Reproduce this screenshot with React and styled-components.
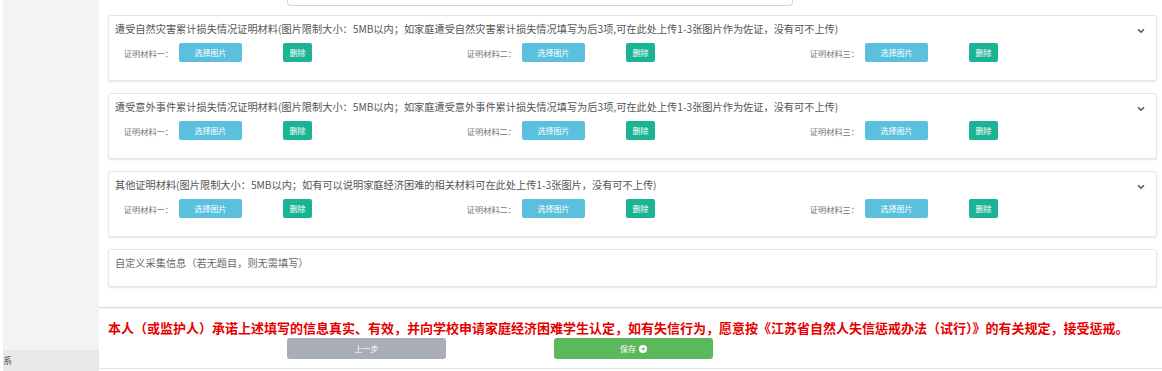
import React from 'react';
import styled, { createGlobalStyle } from 'styled-components';

const GlobalStyle = createGlobalStyle`
  html, body {
    margin: 0;
    padding: 0;
    background: #fff;
    font-family: "Noto Sans CJK SC", "Noto Sans", sans-serif;
  }
`;

const Page = styled.div`
  display: flex;
  height: 371px;
  overflow: hidden;
`;

const Sidebar = styled.div`
  flex-shrink: 0;
  width: 96px;
  margin-left: 3px;
  display: flex;
  flex-direction: column;
  background: #f3f3f3;
`;

const SidebarFill = styled.div`
  flex: 1;
`;

const SidebarFoot = styled.div`
  height: 21px;
  background: #e9e9e9;
  font-size: 9px;
  color: #555;
  line-height: 21px;
  overflow: hidden;
`;

const Main = styled.div`
  flex: 1;
  min-width: 0;
  display: flex;
  flex-direction: column;
  border-bottom: 1px solid #e4e4e4;
  margin-bottom: 2px;
`;

const TopStub = styled.div`
  margin-left: 188px;
  width: 504px;
  height: 5px;
  border: 1px solid #d2d2d2;
  border-top: none;
  border-radius: 0 0 4px 4px;
`;

const Panels = styled.div`
  display: flex;
  flex-direction: column;
  gap: 12px;
  margin: 9px 5px 0 9px;
`;

const Panel = styled.div`
  position: relative;
  box-sizing: border-box;
  height: ${p => (p.$short ? 38 : 66)}px;
  border: 1px solid #e6e6e6;
  border-radius: 3px;
  box-shadow: 0 1px 2px rgba(0, 0, 0, 0.1);
  padding: 5px 7px 0 6px;
  background: #fff;
  overflow: hidden;
`;

const Title = styled.div`
  font-size: 10.2px;
  line-height: 16px;
  color: ${p => (p.$muted ? '#6a6a6a' : '#555')};
  white-space: nowrap;
`;

const Chevron = styled.svg`
  position: absolute;
  right: 11px;
  top: 12px;
  width: 8px;
  height: 6px;
`;

const Row = styled.div`
  display: grid;
  grid-template-columns: repeat(3, 343px);
  margin-top: 6px;
`;

const Item = styled.div`
  display: flex;
  align-items: center;
  height: 19px;
`;

const Label = styled.span`
  width: 58px;
  text-align: right;
  font-size: 8.2px;
  color: #777;
  white-space: nowrap;
`;

const SmallButton = styled.span`
  display: inline-flex;
  align-items: center;
  justify-content: center;
  box-sizing: border-box;
  height: 19px;
  width: ${p => p.$w}px;
  margin-left: ${p => p.$ml}px;
  border-radius: 2px;
  background: ${p => p.$bg};
  color: #fff;
  font-size: 8px;
`;

const Divider = styled.div`
  margin-top: 20px;
  height: 1px;
  background: #d9d9d9;
  box-shadow: 0 1px 1px rgba(0, 0, 0, 0.05);
`;

const Promise = styled.div`
  margin: 12px 0 0 9px;
  font-size: 13px;
  line-height: 16px;
  font-weight: bold;
  color: #e50000;
  white-space: nowrap;
`;

const Actions = styled.div`
  display: flex;
  gap: 108px;
  margin: 2px 0 0 188px;
`;

const ActionButton = styled.span`
  display: inline-flex;
  align-items: center;
  justify-content: center;
  gap: 3px;
  width: 159px;
  height: 21px;
  border-radius: 3px;
  background: ${p => p.$bg};
  color: #fff;
  font-size: 8px;
`;

const materials = ['证明材料一：', '证明材料二：', '证明材料三：'];

const UploadPanel = ({ title }) => (
  <Panel>
    <Title>{title}</Title>
    <Chevron viewBox="0 0 8 6">
      <path d="M1 1.2 L4 4.2 L7 1.2" fill="none" stroke="#555" strokeWidth="1.6" />
    </Chevron>
    <Row>
      {materials.map(m => (
        <Item key={m}>
          <Label>{m}</Label>
          <SmallButton $w={63} $ml={6} $bg="#5bc0de">选择图片</SmallButton>
          <SmallButton $w={29} $ml={41} $bg="#1ab394">删除</SmallButton>
        </Item>
      ))}
    </Row>
  </Panel>
);

const ArrowCircle = () => (
  <svg width="8" height="8" viewBox="0 0 16 16">
    <circle cx="8" cy="8" r="8" fill="#fff" />
    <path d="M4 6.8h4.2V4.5L12 8l-3.8 3.5V9.2H4z" fill="#5cb85c" />
  </svg>
);

export default function App() {
  return (
    <>
      <GlobalStyle />
      <Page>
        <Sidebar>
          <SidebarFill />
          <SidebarFoot>系</SidebarFoot>
        </Sidebar>
        <Main>
          <TopStub />
          <Panels>
            <UploadPanel title="遭受自然灾害累计损失情况证明材料(图片限制大小：5MB以内；如家庭遭受自然灾害累计损失情况填写为后3项,可在此处上传1-3张图片作为佐证，没有可不上传)" />
            <UploadPanel title="遭受意外事件累计损失情况证明材料(图片限制大小：5MB以内；如家庭遭受意外事件累计损失情况填写为后3项,可在此处上传1-3张图片作为佐证，没有可不上传)" />
            <UploadPanel title="其他证明材料(图片限制大小：5MB以内；如有可以说明家庭经济困难的相关材料可在此处上传1-3张图片，没有可不上传)" />
            <Panel $short>
              <Title $muted>自定义采集信息（若无题目，则无需填写）</Title>
            </Panel>
          </Panels>
          <Divider />
          <Promise>本人（或监护人）承诺上述填写的信息真实、有效，并向学校申请家庭经济困难学生认定，如有失信行为，愿意按《江苏省自然人失信惩戒办法（试行）》的有关规定，接受惩戒。</Promise>
          <Actions>
            <ActionButton $bg="#a9adb5">上一步</ActionButton>
            <ActionButton $bg="#5cb85c">保存 <ArrowCircle /></ActionButton>
          </Actions>
        </Main>
      </Page>
    </>
  );
}
